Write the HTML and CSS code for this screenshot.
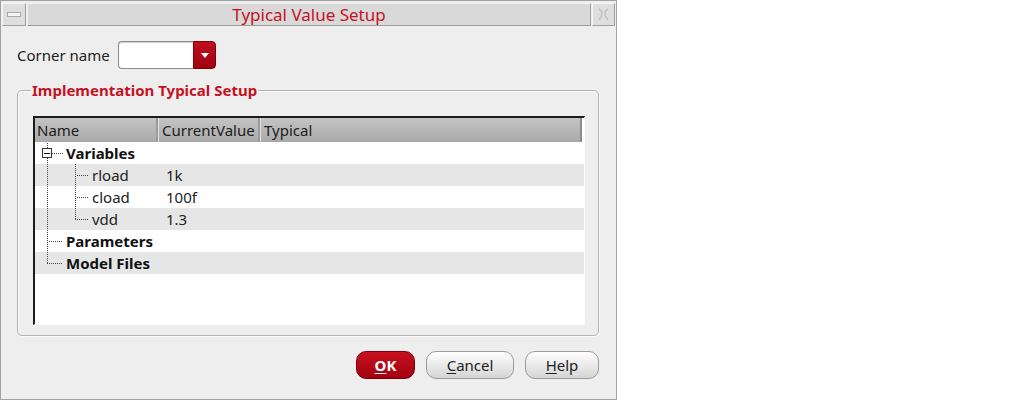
FILE: index.html
```html
<!DOCTYPE html>
<html>
<head>
<meta charset="utf-8">
<link rel="stylesheet" href="styles.css">
</head>
<body>
<div class="win">
  <div class="titlebar">
    <div class="tb-btn menu"><span class="dash"></span></div>
    <div class="tb-title">Typical Value Setup</div>
    <div class="tb-btn close">
      <svg width="21" height="21" viewBox="0 0 21 21"><path d="M6 5 Q10 8 9 10.5 Q8 13 6 16 M15 5 Q11 8 12 10.5 Q13 13 15 16" fill="none" stroke="#c4c4c4" stroke-width="1.6"/></svg>
    </div>
  </div>
  <div class="content">
    <div class="corner-row">
      <span class="lbl">Corner name</span>
      <div class="combo"><div class="field"></div><div class="arrow"><span class="tri"></span></div></div>
    </div>
    <fieldset class="group">
      <legend>Implementation Typical Setup</legend>
      <div class="tree">
        <div class="hdr">
          <div class="c-name">Name</div>
          <div class="c-val">CurrentValue</div>
          <div class="c-typ">Typical</div>
        </div>
        <div class="row">
          <div class="c-name">
            <svg width="31" height="22" viewBox="0 0 31 22"><path d="M12.5 1V6 M12.5 16V22 M17 11.5H29" stroke="#444" stroke-dasharray="1 1" fill="none"/><rect x="7.5" y="6.5" width="9" height="9" fill="#fff" stroke="#333"/><path d="M9 11.5H15" stroke="#111"/></svg>
            <b>Variables</b>
          </div>
          <div class="c-val"></div><div class="c-typ"></div>
        </div>
        <div class="row alt">
          <div class="c-name">
            <svg width="57" height="22" viewBox="0 0 57 22"><path d="M12.5 0V22 M40.5 0V22 M42 11.5H54" stroke="#444" stroke-dasharray="1 1" fill="none"/></svg>
            <span>rload</span>
          </div>
          <div class="c-val">1k</div><div class="c-typ"></div>
        </div>
        <div class="row">
          <div class="c-name">
            <svg width="57" height="22" viewBox="0 0 57 22"><path d="M12.5 0V22 M40.5 0V22 M42 11.5H54" stroke="#444" stroke-dasharray="1 1" fill="none"/></svg>
            <span>cload</span>
          </div>
          <div class="c-val">100f</div><div class="c-typ"></div>
        </div>
        <div class="row alt">
          <div class="c-name">
            <svg width="57" height="22" viewBox="0 0 57 22"><path d="M12.5 0V22 M40.5 0V11 M40 11.5H54" stroke="#444" stroke-dasharray="1 1" fill="none"/></svg>
            <span>vdd</span>
          </div>
          <div class="c-val">1.3</div><div class="c-typ"></div>
        </div>
        <div class="row">
          <div class="c-name">
            <svg width="31" height="22" viewBox="0 0 31 22"><path d="M12.5 0V22 M14 11.5H28" stroke="#444" stroke-dasharray="1 1" fill="none"/></svg>
            <b>Parameters</b>
          </div>
          <div class="c-val"></div><div class="c-typ"></div>
        </div>
        <div class="row alt">
          <div class="c-name">
            <svg width="31" height="22" viewBox="0 0 31 22"><path d="M12.5 0V11 M12 11.5H28" stroke="#444" stroke-dasharray="1 1" fill="none"/></svg>
            <b>Model Files</b>
          </div>
          <div class="c-val"></div><div class="c-typ"></div>
        </div>
      </div>
    </fieldset>
    <div class="buttons">
      <div class="btn ok"><u>O</u>K</div>
      <div class="btn cancel"><u>C</u>ancel</div>
      <div class="btn help"><u>H</u>elp</div>
    </div>
  </div>
</div>
</body>
</html>
```

FILE: styles.css
```css
html, body {
  margin: 0;
  padding: 0;
  background: #ffffff;
}
body {
  font-family: "Noto Sans", "Open Sans", "DejaVu Sans", sans-serif;
  color: #1e1e1e;
}
.win {
  width: 617px;
  height: 400px;
  box-sizing: border-box;
  border: 1px solid #a2a2a2;
  background: #eeeeee;
  display: flex;
  flex-direction: column;
}
.titlebar {
  display: flex;
  height: 23px;
  margin: 2px 1px 0 1px;
  gap: 1px;
}
.tb-btn {
  box-sizing: border-box;
  background: #dedede;
  border-top: 1px solid #f6f6f6;
  border-left: 1px solid #f6f6f6;
  border-right: 1px solid #9e9e9e;
  border-bottom: 1px solid #9e9e9e;
  display: flex;
  align-items: center;
  justify-content: center;
}
.tb-btn.menu { width: 24px; }
.tb-btn.close { width: 23px; }
.dash {
  width: 12px;
  height: 3px;
  border: 1px solid #a8a8a8;
  background: #f4f4f4;
}
.tb-title {
  flex: 1;
  box-sizing: border-box;
  background: #d9d9d9;
  border-top: 1px solid #f2f2f2;
  border-left: 1px solid #f2f2f2;
  border-right: 1px solid #9e9e9e;
  border-bottom: 1px solid #9e9e9e;
  color: #c4121f;
  font-size: 17px;
  line-height: 21px;
  text-align: center;
}
.content {
  flex: 1;
  display: flex;
  flex-direction: column;
  padding: 15px 17px 0 16px;
}
.corner-row {
  display: flex;
  align-items: center;
  height: 28px;
}
.lbl {
  width: 101px;
  font-size: 15px;
  color: #222;
}
.combo {
  display: flex;
  height: 28px;
  width: 98px;
}
.field {
  flex: 1;
  box-sizing: border-box;
  background: #ffffff;
  border: 1px solid #8c8c8c;
  border-right: none;
  border-radius: 4px 0 0 4px;
  box-shadow: inset 0 1px 1px #cfcfcf;
}
.arrow {
  width: 23px;
  box-sizing: border-box;
  background: linear-gradient(#c0101e, #a0000e);
  border: 1px solid #7e0008;
  border-radius: 0 4px 4px 0;
  display: flex;
  align-items: center;
  justify-content: center;
}
.tri {
  width: 0;
  height: 0;
  border-left: 4px solid transparent;
  border-right: 4px solid transparent;
  border-top: 5px solid #ffffff;
}
.group {
  margin: 13px 0 0 0;
  padding: 18px 13px 10px 15px;
  border: 1px solid #b4b4b4;
  border-radius: 5px;
  box-shadow: inset 1px 1px 0 #fafafa, 1px 1px 0 #fafafa;
  min-width: 0;
}
.group legend {
  margin-left: -2px;
  padding: 0 1px 0 1px;
  font-size: 15px;
  line-height: 16px;
  font-weight: bold;
  color: #c4121f;
}
.tree {
  height: 209px;
  box-sizing: border-box;
  background: #ffffff;
  border-top: 2px solid #1c1c1c;
  border-left: 2px solid #1c1c1c;
  border-right: 1px solid #fbfbfb;
  border-bottom: 1px solid #fbfbfb;
  display: flex;
  flex-direction: column;
  font-size: 15px;
}
.hdr {
  display: flex;
  height: 24px;
  background: linear-gradient(#c4c4c4, #a9a9a9);
  align-items: center;
  color: #1c1c1c;
  margin-right: 2px;
  box-shadow: inset -2px 0 0 #8a8a8a;
}
.hdr .c-name { padding-left: 2px; }
.hdr .c-val, .hdr .c-typ {
  padding-left: 3px;
  border-left: 1px solid #e2e2e2;
  box-shadow: -2px 0 0 #9a9a9a;
  height: 24px;
  line-height: 24px;
}
.c-name {
  width: 123px;
  box-sizing: border-box;
  display: flex;
  align-items: center;
  height: 100%;
  white-space: nowrap;
}
.c-val {
  width: 102px;
  box-sizing: border-box;
  padding-left: 8px;
  white-space: nowrap;
}
.c-typ { flex: 1; }
.hdr .c-val { width: 102px; }
.row {
  display: flex;
  height: 22px;
  align-items: center;
  background: #ffffff;
  color: #222;
}
.row.alt { background: #e6e6e6; }
.row svg { display: block; flex: none; }
.row b { font-weight: bold; color: #111; }
.buttons {
  display: flex;
  justify-content: flex-end;
  gap: 11px;
  margin-top: 15px;
}
.btn {
  height: 28px;
  box-sizing: border-box;
  border-radius: 10px;
  font-size: 15px;
  display: flex;
  align-items: center;
  justify-content: center;
}
.btn u { text-decoration-thickness: 1px; text-underline-offset: 2px; }
.btn.ok {
  width: 59px;
  background: linear-gradient(#c8101f, #a3000f);
  border: 1px solid #7a0008;
  color: #ffffff;
  font-weight: bold;
}
.btn.cancel, .btn.help {
  background: linear-gradient(#fefefe, #e6e6e6 60%, #d4d4d4);
  border: 1px solid #9c9c9c;
  color: #222;
}
.btn.cancel { width: 88px; }
.btn.help { width: 74px; }
```
